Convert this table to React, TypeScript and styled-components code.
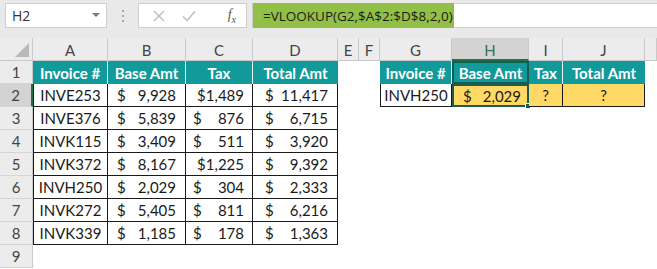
import styled, { createGlobalStyle } from "styled-components";

const GlobalStyle = createGlobalStyle`
    html, body {
        margin: 0;
        padding: 0;
        background: #ffffff;
        overflow: hidden;
    }
    * {
        box-sizing: border-box;
    }
`;

const Sheet = styled.div`
    width: 657px;
    height: 269px;
    display: flex;
    flex-direction: column;
    background: #ffffff;
    font-family: "Lato", "Liberation Sans", sans-serif;
    color: #1a1a1a;
`;

/* formula bar */
const Toolbar = styled.div`
    height: 38px;
    background: #e9e9e9;
    display: flex;
    flex-direction: row;
    align-items: flex-start;
    padding-top: 3px;
    padding-left: 5px;
    font-family: "Open Sans", "Liberation Sans", sans-serif;
`;

const NameBox = styled.div`
    width: 102px;
    height: 25px;
    background: #ffffff;
    border: 1px solid #cfcfcf;
    display: flex;
    align-items: center;
    justify-content: space-between;
    padding: 0 6px 0 6px;
    font-size: 14px;
    color: #333;

    .caret {
        width: 0;
        height: 0;
        border-left: 4px solid transparent;
        border-right: 4px solid transparent;
        border-top: 4px solid #7a7a7a;
        margin-top: -2px;
    }
`;

const Grip = styled.div`
    width: 31px;
    height: 25px;
    display: flex;
    flex-direction: column;
    align-items: center;
    justify-content: center;
    gap: 3px;

    span {
        width: 2px;
        height: 2px;
        background: #a8a8a8;
    }
`;

const FxBox = styled.div`
    width: 109px;
    height: 25px;
    background: #ffffff;
    border: 1px solid #cfcfcf;
    display: flex;
    align-items: center;
    padding: 0 10px 0 14px;
    gap: 17px;
    color: #b8b8b8;

    .fx {
        margin-left: auto;
        font-family: "Liberation Serif", serif;
        font-style: italic;
        font-size: 14px;
        color: #555;
    }
`;

const FormulaBox = styled.div`
    flex: 1;
    height: 25px;
    margin-left: 5px;
    background: #ffffff;
    border: 1px solid #cfcfcf;
    border-right: none;
    display: flex;
`;

const FormulaText = styled.div`
    width: 201px;
    margin: -1px 0;
    background: #92c046;
    display: flex;
    align-items: center;
    padding-left: 10px;
    font-size: 13.5px;
    color: #1c1c1c;
    white-space: nowrap;
`;

/* worksheet */
const Grid = styled.div`
    display: grid;
    grid-template-columns: 33px 75px 78px 67px 85px 21px 21px 72px 77px 34px 82px 1fr;
    grid-auto-rows: 23px;
    font-size: 15px;
`;

const Corner = styled.div`
    background: #ececec;
    border-right: 1px solid #c9c9c9;
    border-bottom: 1px solid #c9c9c9;
    position: relative;

    &::after {
        content: "";
        position: absolute;
        right: 3px;
        bottom: 3px;
        width: 0;
        height: 0;
        border-left: 14px solid transparent;
        border-bottom: 14px solid #b9b9b9;
    }
`;

const ColHead = styled.div<{ $active?: boolean }>`
    background: ${(p) => (p.$active ? "#d3d3d3" : "#ececec")};
    border-right: 1px solid #c9c9c9;
    border-bottom: ${(p) => (p.$active ? "2px solid #217346" : "1px solid #c9c9c9")};
    display: flex;
    align-items: center;
    justify-content: center;
    color: ${(p) => (p.$active ? "#3f6e5c" : "#444")};
    padding-top: 2px;
`;

const RowHead = styled.div<{ $active?: boolean }>`
    background: ${(p) => (p.$active ? "#d3d3d3" : "#ececec")};
    border-right: ${(p) => (p.$active ? "2px solid #217346" : "1px solid #c9c9c9")};
    border-bottom: 1px solid #d6d6d6;
    display: flex;
    align-items: center;
    justify-content: center;
    color: #444;
`;

const Blank = styled.div``;

const Title = styled.div<{ $last?: boolean; $focus?: boolean }>`
    background: #129a9a;
    color: #ffffff;
    font-weight: bold;
    display: flex;
    align-items: center;
    justify-content: center;
    white-space: nowrap;
    border-right: ${(p) => (p.$last ? "none" : "1px solid #e6f4f4")};
    ${(p) => p.$focus && "border: 2px solid #155c56;"}
`;

const Cell = styled.div<{ $first?: boolean; $fill?: boolean; $focus?: boolean }>`
    position: relative;
    background: ${(p) => (p.$fill ? "#ffd966" : "#ffffff")};
    border-right: 1px solid #1a1a1a;
    border-bottom: 1px solid #1a1a1a;
    border-left: ${(p) => (p.$first ? "1px solid #1a1a1a" : "none")};
    display: flex;
    align-items: center;
    justify-content: center;
    white-space: nowrap;
    ${(p) => p.$focus && "border: 2px solid #1d5c4c;"}
`;

const Money = styled(Cell)<{ $pl: number; $pr: number; $joined?: boolean }>`
    justify-content: ${(p) => (p.$joined ? "flex-end" : "space-between")};
    padding: 0 ${(p) => p.$pr}px 0 ${(p) => p.$pl}px;
`;

const Handle = styled.span`
    position: absolute;
    right: -4px;
    bottom: -4px;
    width: 6px;
    height: 6px;
    background: #1d5c4c;
    border: 1px solid #ffffff;
`;

type Invoice = { id: string; base: string; tax: string; total: string };

const invoices: Invoice[] = [
    { id: "INVE253", base: "9,928", tax: "1,489", total: "11,417" },
    { id: "INVE376", base: "5,839", tax: "876", total: "6,715" },
    { id: "INVK115", base: "3,409", tax: "511", total: "3,920" },
    { id: "INVK372", base: "8,167", tax: "1,225", total: "9,392" },
    { id: "INVH250", base: "2,029", tax: "304", total: "2,333" },
    { id: "INVK272", base: "5,405", tax: "811", total: "6,216" },
    { id: "INVK339", base: "1,185", tax: "178", total: "1,363" },
];

const columns = ["A", "B", "C", "D", "E", "F", "G", "H", "I", "J", ""];

// accounting format: "$" pinned left, figure pinned right; narrow columns run them together
function Amount(props: { value: string; pl: number; pr: number; joined?: boolean; fill?: boolean; focus?: boolean }) {
    return (
        <Money $pl={props.pl} $pr={props.pr} $joined={props.joined} $fill={props.fill} $focus={props.focus}>
            {props.joined ? (
                <span>${props.value}</span>
            ) : (
                <>
                    <span>$</span>
                    <span>{props.value}</span>
                </>
            )}
            {props.focus && <Handle />}
        </Money>
    );
}

export default function App() {
    return (
        <Sheet>
            <GlobalStyle />
            <Toolbar>
                <NameBox>
                    <span>H2</span>
                    <span className="caret" />
                </NameBox>
                <Grip>
                    <span />
                    <span />
                    <span />
                </Grip>
                <FxBox>
                    <svg width="12" height="12" viewBox="0 0 12 12">
                        <path d="M1 1 L11 11 M11 1 L1 11" stroke="#bcbcbc" strokeWidth="1.4" fill="none" />
                    </svg>
                    <svg width="14" height="12" viewBox="0 0 14 12">
                        <path d="M1 6.5 L5 10.5 L13 1.5" stroke="#bcbcbc" strokeWidth="1.4" fill="none" />
                    </svg>
                    <span className="fx">f<sub style={{ fontSize: 10 }}>x</sub></span>
                </FxBox>
                <FormulaBox>
                    <FormulaText>=VLOOKUP(G2,$A$2:$D$8,2,0)</FormulaText>
                </FormulaBox>
            </Toolbar>

            <Grid>
                <Corner />
                {columns.map((c, i) => (
                    <ColHead key={i} $active={c === "H"}>
                        {c}
                    </ColHead>
                ))}

                {/* row 1: table headings */}
                <RowHead>1</RowHead>
                <Title>Invoice #</Title>
                <Title>Base Amt</Title>
                <Title>Tax</Title>
                <Title $last>Total Amt</Title>
                <Blank />
                <Blank />
                <Title>Invoice #</Title>
                <Title $focus>Base Amt</Title>
                <Title>Tax</Title>
                <Title $last>Total Amt</Title>
                <Blank />

                {invoices.map((inv, i) => (
                    <Row key={inv.id} n={i + 2} inv={inv} />
                ))}

                <RowHead>9</RowHead>
                {columns.map((_, i) => (
                    <Blank key={i} />
                ))}
            </Grid>
        </Sheet>
    );
}

function Row(props: { n: number; inv: Invoice }) {
    const { n, inv } = props;
    const lookup = n === 2;
    return (
        <>
            <RowHead $active={lookup}>{n}</RowHead>
            <Cell $first>{inv.id}</Cell>
            <Amount value={inv.base} pl={9} pr={9} />
            <Amount value={inv.tax} pl={7} pr={8} joined={inv.tax.length > 4} />
            <Amount value={inv.total} pl={12} pr={9} />
            <Blank />
            <Blank />
            {lookup ? (
                <>
                    <Cell $first>INVH250</Cell>
                    <Amount value="2,029" pl={9} pr={6} fill focus />
                    <Cell $fill>?</Cell>
                    <Cell $fill>?</Cell>
                </>
            ) : (
                <>
                    <Blank />
                    <Blank />
                    <Blank />
                    <Blank />
                </>
            )}
            <Blank />
        </>
    );
}
